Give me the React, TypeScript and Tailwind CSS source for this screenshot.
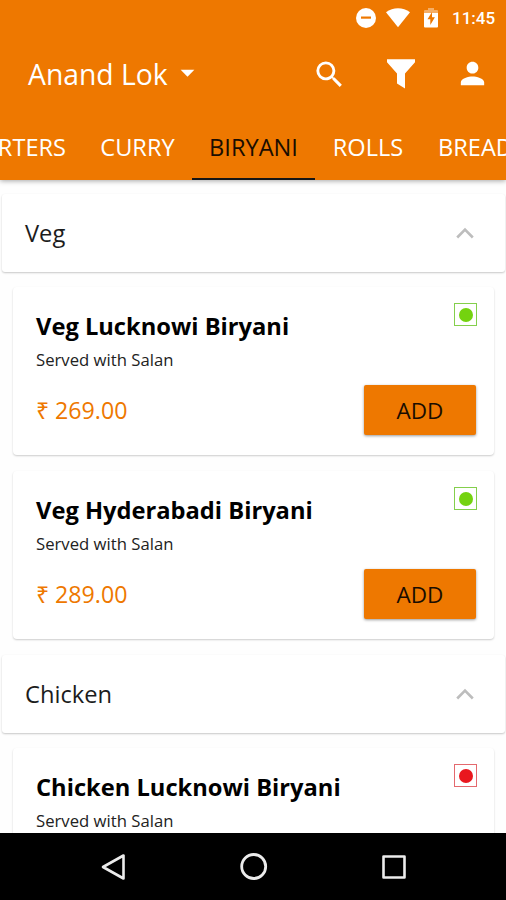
import React from 'react';
import { MdSearch, MdPerson, MdArrowDropDown } from 'react-icons/md';

interface Dish {
  name: string;
  note: string;
  price: string;
  veg: boolean;
}

interface Section {
  title: string;
  dishes: Dish[];
}

const tabs = [
  { label: 'STARTERS', width: 'w-[133px] -ml-[50px] justify-end pr-[17px]' },
  { label: 'CURRY', width: 'w-[109px] justify-center' },
  { label: 'BIRYANI', width: 'w-[123px] justify-center' },
  { label: 'ROLLS', width: 'w-[106px] justify-center' },
  { label: 'BREADS', width: 'w-[120px] pl-[17px]' },
];

const sections: Section[] = [
  {
    title: 'Veg',
    dishes: [
      { name: 'Veg Lucknowi Biryani', note: 'Served with Salan', price: '₹ 269.00', veg: true },
      { name: 'Veg Hyderabadi Biryani', note: 'Served with Salan', price: '₹ 289.00', veg: true },
    ],
  },
  {
    title: 'Chicken',
    dishes: [
      { name: 'Chicken Lucknowi Biryani', note: 'Served with Salan', price: '₹ 299.00', veg: false },
    ],
  },
];

const StatusBar: React.FC = () => (
  <div className="flex h-[36px] items-center justify-end pr-[11px] text-white">
    <svg className="h-[20px] w-[20px]" viewBox="0 0 20 20" fill="none">
      <circle cx="10" cy="10" r="10" fill="#fff" />
      <path d="M5 9.6h10" stroke="#ee7800" strokeWidth="2.2" />
    </svg>
    <svg className="ml-[10px] h-[20px] w-[24px]" viewBox="0 0 24 20" fill="#fff">
      <path d="M0 4.2C7 -1 17 -1 24 4.2L12 19.2z" />
    </svg>
    <svg className="ml-[14px] h-[20px] w-[14px]" viewBox="0 0 14 20" fill="#fff">
      <path d="M4 0h6v2h3a1 1 0 0 1 1 1v2H0V3a1 1 0 0 1 1-1h3z" opacity=".4" />
      <path d="M0 5h14v13.5a1 1 0 0 1-1 1H1a1 1 0 0 1-1-1z" />
      <path d="M8 4L3.5 11.2h2.8v5.8l4.6-7.8H8z" fill="#ee7800" />
    </svg>
    <span className="ml-[14px] w-[43px] whitespace-nowrap font-[Roboto,sans-serif] text-[17px] font-medium leading-none">11:45</span>
  </div>
);

const Header: React.FC = () => (
  <header className="relative z-10 h-[180px] shrink-0 bg-[#ee7800] text-white shadow-[0_1px_5px_rgba(0,0,0,0.35)]">
    <StatusBar />
    <div className="flex h-[76px] items-center pl-[28px] pr-[16px]">
      <span className="whitespace-nowrap text-[28.3px] leading-none">Anand Lok</span>
      <MdArrowDropDown className="mb-[4px] ml-[3px] h-[33px] w-[33px]" />
      <MdSearch className="ml-auto h-[35px] w-[35px]" />
      <svg className="ml-[40px] h-[30px] w-[28px]" viewBox="0 0 28 30" fill="#fff">
        <path d="M0 0.3h28v3L18 14.5V29.5l-8-5V14.5L0 3.3z" />
      </svg>
      <MdPerson className="mb-[2px] ml-[40px] h-[35px] w-[35px]" />
    </div>
    <nav className="flex h-[68px] overflow-hidden text-[23.6px]">
      {tabs.map((tab) => (
        <div
          key={tab.label}
          className={`flex shrink-0 items-center whitespace-nowrap border-b-2 pt-[5px] ${tab.width} ${tab.label === 'BIRYANI' ? 'border-[#161616] text-[#1a0d00]' : 'border-transparent'}`}
        >
          {tab.label}
        </div>
      ))}
    </nav>
  </header>
);

const DietMark: React.FC<{ veg: boolean }> = ({ veg }) => (
  <div className={`flex h-[23px] w-[23px] items-center justify-center border ${veg ? 'border-[#84cf4c]' : 'border-[#e4696e]'}`}>
    <div className={`h-[14px] w-[14px] rounded-full ${veg ? 'bg-[#74d30f]' : 'bg-[#e9171e]'}`}></div>
  </div>
);

const SectionHeader: React.FC<{ title: string }> = ({ title }) => (
  <div className="ml-[2px] mr-px mb-[15px] flex h-[78px] items-center justify-between rounded-[3px] bg-white pl-[23px] pr-[31px] shadow-[0_1px_2px_rgba(0,0,0,0.22)]">
    <h2 className="pt-px text-[23.7px] text-[#1c1c1c]">{title}</h2>
    <svg className="h-[12px] w-[18px]" viewBox="0 0 18 12" fill="none">
      <path d="M1.2 10.5L9 2.6l7.8 7.9" stroke="#bdbdbd" strokeWidth="2.6" />
    </svg>
  </div>
);

const DishCard: React.FC<{ dish: Dish }> = ({ dish }) => (
  <div className="ml-[13px] mr-[12px] mb-[16px] flex h-[168px] flex-col rounded-[4px] bg-white pl-[23px] pr-[17px] pt-[16px] shadow-[0_1px_2px_rgba(0,0,0,0.2)]">
    <div className="flex h-[82px] justify-between">
      <div className="pt-[7px]">
        <h3 className="whitespace-nowrap text-[23.7px] font-bold leading-[33px] text-black">{dish.name}</h3>
        <p className="mt-[6px] whitespace-nowrap text-[16.7px] leading-[22px] text-[#222]">{dish.note}</p>
      </div>
      <DietMark veg={dish.veg} />
    </div>
    <div className="flex h-[50px] items-center justify-between">
      <span className="text-[23.2px] text-[#ee7800]">{dish.price}</span>
      <button className="mr-px h-[50px] w-[112px] rounded-[2px] bg-[#ee7800] pt-px text-[22.5px] text-[#1a0d00] shadow-[0_1px_3px_rgba(0,0,0,0.4)]">ADD</button>
    </div>
  </div>
);

const NavBar: React.FC = () => (
  <div className="relative z-10 flex h-[67px] shrink-0 items-center bg-black pl-[100px]">
    <svg className="h-[28px] w-[28px]" viewBox="0 0 28 28" fill="none" stroke="#ececec" strokeWidth="2.6" strokeLinejoin="round">
      <path d="M3 14L23.5 2.5v23z" />
    </svg>
    <svg className="ml-[112px] h-[28px] w-[28px]" viewBox="0 0 28 28" fill="none" stroke="#ececec" strokeWidth="2.8">
      <circle cx="13.7" cy="13.5" r="12" />
    </svg>
    <svg className="ml-[113px] h-[26px] w-[26px]" viewBox="0 0 26 26" fill="none" stroke="#ececec" strokeWidth="2.6" strokeLinejoin="round">
      <path d="M2.5 2.5h21v21h-21z" />
    </svg>
  </div>
);

const App: React.FC = () => {
  return (
    <div className="flex h-[900px] w-[506px] flex-col overflow-hidden bg-[#fefefe] font-['Open_Sans',sans-serif]">
      <Header />
      <main className="min-h-0 flex-1 overflow-hidden pt-[14px]">
        {sections.map((section) => (
          <section key={section.title}>
            <SectionHeader title={section.title} />
            {section.dishes.map((dish) => (
              <DishCard key={dish.name} dish={dish} />
            ))}
          </section>
        ))}
      </main>
      <NavBar />
    </div>
  );
};

export default App;
